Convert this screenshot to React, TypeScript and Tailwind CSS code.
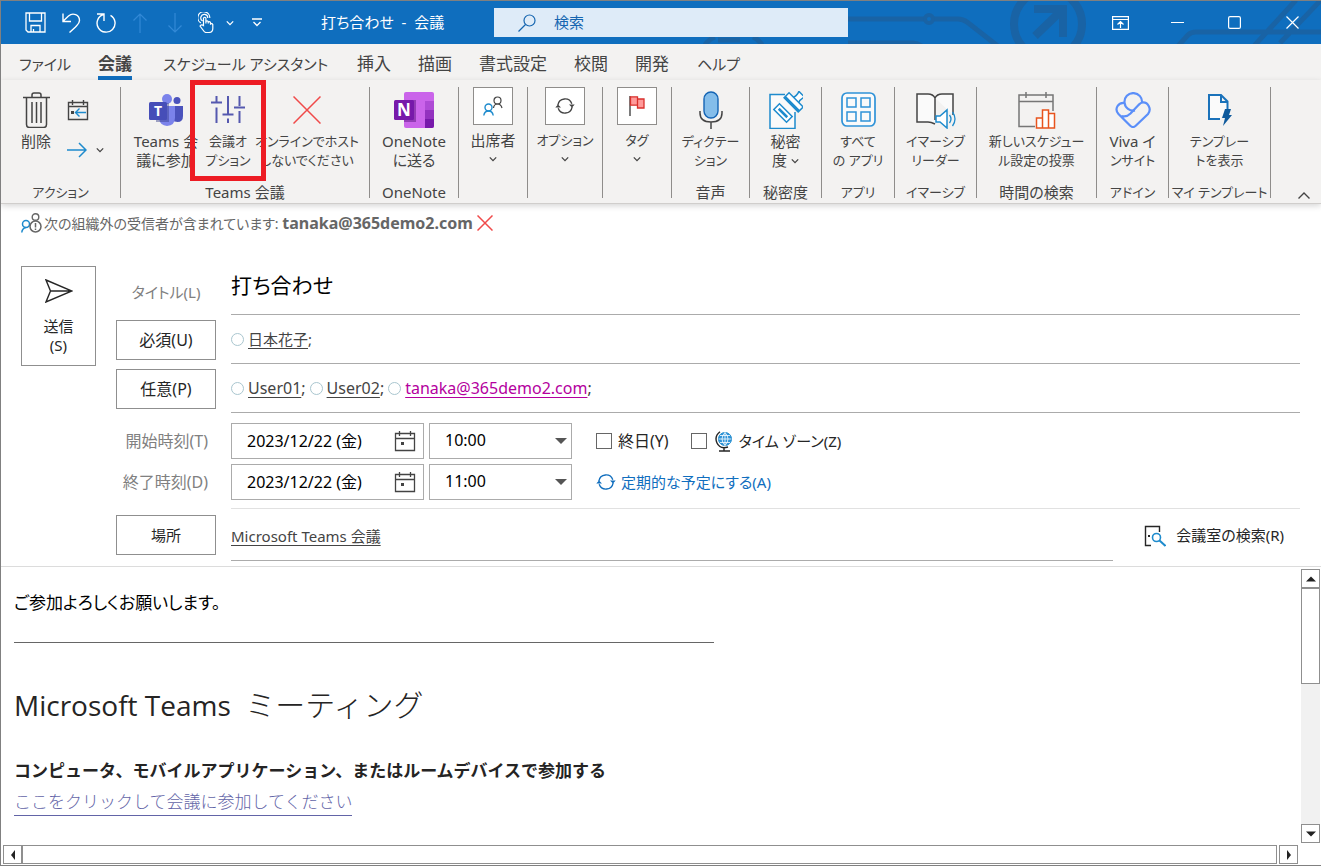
import type { ReactNode } from 'react';

const tabs = [
  { label: 'ファイル', width: 'w-[79px]', kana: true },
  { label: '会議', width: 'w-[65px]', active: true },
  { label: 'スケジュール アシスタント', width: 'w-[194px]', kana: true },
  { label: '挿入', width: 'w-[61px]' },
  { label: '描画', width: 'w-[61px]' },
  { label: '書式設定', width: 'w-[95px]' },
  { label: '校閲', width: 'w-[61px]' },
  { label: '開発', width: 'w-[62px]' },
  { label: 'ヘルプ', width: 'w-[60px]', kana: true },
];

type IconProps = { children: ReactNode; className?: string; box?: string };

function Icon({ children, className = 'w-5 h-5', box = '0 0 20 20' }: IconProps) {
  return (
    <svg viewBox={box} className={`shrink-0 ${className}`} fill="none" stroke="currentColor" aria-hidden="true">
      {children}
    </svg>
  );
}

function Chevron({ className = 'w-2 h-2' }: { className?: string }) {
  return (
    <Icon className={className} box="0 0 8 8">
      <path d="M.8 2.4 4 5.6 7.2 2.4" strokeWidth="1.3" />
    </Icon>
  );
}

function Sync({ className = 'w-5 h-5' }: { className?: string }) {
  return (
    <Icon className={className}>
      <path d="M2.9 9a7.2 7.2 0 0 1 13.9-1.3M17.1 11A7.2 7.2 0 0 1 3.2 12.3" strokeWidth="1.4" />
      <path d="m.3 11.5 2.7-3 3 3M14 8.5l3 3 2.7-3" fill="currentColor" stroke="none" />
    </Icon>
  );
}

function CalendarIcon() {
  return (
    <Icon className="w-[22px] h-[22px] text-[#444]" box="0 0 22 22">
      <path d="M1.5 3.5h19v17h-19zM1.5 8.5h19M5.5 1v5M16.5 1v5" strokeWidth="1.3" />
      <path d="M7 12h3v3H7z" fill="currentColor" stroke="none" />
    </Icon>
  );
}

function TitleBar() {
  return (
    <header className="relative flex h-[43px] shrink-0 items-center bg-[#0f6ebe] text-[15px] text-white">
      <svg className="absolute right-0 top-0 h-[43px] w-[621px]" viewBox="0 0 621 43" fill="none" stroke="#1963a5" strokeWidth="5" aria-hidden="true">
        <path d="M148 18h76M234 18h24q5 0 9 3l32 25M5 44q4-6 10-8M53 36q5 2 9 8M18 39h22M148 42h65q5 0 10 4" />
        <circle cx="229" cy="18" r="4" strokeWidth="4" />
        <circle cx="348" cy="23" r="34" strokeWidth="8" />
        <path d="M334 8h29v28M362 9l-27 26" strokeWidth="8" />
        <path d="m478 45 10-11q3-3 8-3h125M554 45l42-46M580 42 621-1" />
      </svg>

      <div className="relative flex w-[493px] shrink-0 items-center">
        <button aria-label="上書き保存" className="ml-6">
          <Icon className="h-[21px] w-[21px]" box="0 0 21 21">
            <path d="M1 1h19v19H3l-2-2zM4.500 1v8h12V1M6 20v-6.500h9V20M8.500 17v3" strokeWidth="1.300" />
          </Icon>
        </button>
        <button aria-label="元に戻す" className="ml-4">
          <Icon className="h-5 w-[19px]" box="0 0 19 20">
            <path d="M1 .5v8h8M1.300 8 6.500 3C11-1 17.500 2 17.500 7.500c0 3-1.500 4-4 6.500l-6 5.500" strokeWidth="1.400" />
          </Icon>
        </button>
        <button aria-label="やり直し" className="ml-[15px]">
          <Icon className="h-5 w-5">
            <path d="M1 1h7v7M7.500 1.500A9 9 0 1 0 14.500 2.300" strokeWidth="1.400" />
          </Icon>
        </button>
        <button aria-label="前のアイテム" className="ml-4 text-[#3289d6]">
          <Icon className="h-5 w-4" box="0 0 16 20">
            <path d="M8 20V1M1.500 7.500 8 1l6.500 6.500" strokeWidth="1.200" />
          </Icon>
        </button>
        <button aria-label="次のアイテム" className="ml-[19px] text-[#3289d6]">
          <Icon className="h-5 w-4" box="0 0 16 20">
            <path d="M8 0v19M1.500 12.500 8 19l6.500-6.500" strokeWidth="1.200" />
          </Icon>
        </button>
        <button aria-label="タッチ/マウス モードの切り替え" className="ml-[15px] flex items-center gap-3">
          <Icon className="h-[21px] w-4" box="0 0 16 21">
            <path d="M3 11A6 6 0 1 1 11.800 6M4.700 9A3.500 3.500 0 1 1 9.800 6" strokeWidth="1.200" />
            <path d="M5.500 13.500V6q1.200-1.500 2.400 0v5.500-2q1.200-1.200 2.300 0v2-1.500q1.200-1 2.300.3v1.700q1.300-1 2.300.5v4q0 4-4 4H8q-1.500 0-3-2.500l-3-4q1.500-2 3.500-.5z" strokeWidth="1.200" />
          </Icon>
          <Chevron />
        </button>
        <button aria-label="クイック アクセス ツール バーのユーザー設定" className="ml-[18px]">
          <Icon className="h-[9px] w-[10px]" box="0 0 10 9">
            <path d="M0 1h10M1.500 4 5 7.500 8.500 4" strokeWidth="1.300" />
          </Icon>
        </button>
        <h1 className="ml-[59px] whitespace-pre">打ち合わせ  -  会議</h1>
      </div>

      <label className="relative flex h-[29px] w-[354px] items-center bg-[#deebf8] text-[#1565b0]">
        <Icon className="ml-6 h-[18px] w-[18px]" box="0 0 18 18">
          <circle cx="11.500" cy="6.500" r="5.500" strokeWidth="1.200" />
          <path d="m7.500 10.500-7 7" strokeWidth="1.200" />
        </Icon>
        <input aria-label="検索" placeholder="検索" className="ml-[18px] min-w-0 flex-1 bg-transparent outline-none placeholder:text-[#1565b0]" />
      </label>

      <div className="relative ml-auto flex items-center">
        <button aria-label="リボンの表示オプション" className="flex w-[58px] justify-center">
          <Icon className="h-[14px] w-[17px]" box="0 0 17 14">
            <path d="M.6.6h15.800v12.800H.6zM.6 3.500h15.800M8.500 12V5.500M5.500 8.500l3-3 3 3" strokeWidth="1.200" />
          </Icon>
        </button>
        <button aria-label="最小化" className="flex w-[57px] justify-center">
          <Icon className="h-[13px] w-[13px]" box="0 0 13 13"><path d="M0 6.500h13" /></Icon>
        </button>
        <button aria-label="最大化" className="flex w-[57px] justify-center">
          <Icon className="h-[13px] w-[13px]" box="0 0 13 13"><rect x=".6" y=".6" width="11.800" height="11.800" rx="1.500" strokeWidth="1.200" /></Icon>
        </button>
        <button aria-label="閉じる" className="flex w-[58px] justify-center">
          <Icon className="h-[13px] w-[13px]" box="0 0 13 13"><path d="m.5.5 12 12m0-12-12 12" strokeWidth="1.200" /></Icon>
        </button>
      </div>
    </header>
  );
}

type GroupProps = { label?: string; width: string; small?: boolean; children: ReactNode };

function Group({ label, width, small, children }: GroupProps) {
  return (
    <section aria-label={label} className={`flex h-[111px] shrink-0 flex-col border-r border-[#8f8d8b] ${width}`}>
      <div className="flex flex-1 justify-center">{children}</div>
      {label && <p className={`h-4 whitespace-nowrap text-center leading-5 ${small ? 'text-[13px]' : ''}`}>{label}</p>}
    </section>
  );
}

type BigButtonProps = { icon: ReactNode; lines: ReactNode[]; width?: string; small?: boolean };

// Large ribbon button: icon area above one or two lines of text
function BigButton({ icon, lines, width = 'w-full', small }: BigButtonProps) {
  return (
    <button className={`flex shrink-0 flex-col items-center ${width} ${small ? 'text-[13px]' : ''}`}>
      <span className="flex h-[45px] items-center justify-center">{icon}</span>
      {lines.map((line, i) => (
        <span key={i} className="flex h-[19px] items-center gap-1 whitespace-nowrap leading-[19px]">{line}</span>
      ))}
    </button>
  );
}

function CollapsedGroup({ icon, label, width, small }: { icon: ReactNode; label: string; width: string; small?: boolean }) {
  return (
    <Group width={width}>
      <button className="flex flex-col items-center">
        <span className="flex h-[38px] w-10 items-center justify-center border border-[#8f8d8b] bg-white">{icon}</span>
        <span className={`mt-1 h-[22px] whitespace-nowrap leading-[22px] ${small ? 'text-[13px]' : ''}`}>{label}</span>
        <Chevron className="mt-1 h-2 w-2" />
      </button>
    </Group>
  );
}

function TeamsLogo() {
  return (
    <svg className="h-8 w-9" viewBox="0 0 36 32" aria-hidden="true">
      <circle cx="29" cy="6.500" r="3.500" fill="#4b53bc" />
      <path d="M24 12h11v10q0 6-5.500 6-3 0-5.500-2z" fill="#4b53bc" />
      <circle cx="19" cy="5" r="5" fill="#7b83eb" />
      <path d="M12 12h15v11.500q0 8-8 8.500-7-.5-8-7.500z" fill="#7b83eb" />
      <rect x="8" y="9" width="13" height="19" fill="#353b8a" opacity=".45" />
      <rect x="1" y="8" width="18" height="18" rx="1.500" fill="#464eb8" />
      <text x="10" y="22" textAnchor="middle" fontSize="14" fontWeight="700" fill="#fff">T</text>
    </svg>
  );
}

function OneNoteLogo() {
  return (
    <svg className="h-9 w-10" viewBox="0 0 40 36" aria-hidden="true">
      <rect x="10" width="30" height="36" rx="2" fill="#ca64ea" />
      <path d="M31 9h9v9h-9z" fill="#ae4bd5" />
      <path d="M31 18h9v9h-9z" fill="#9332bf" />
      <path d="M31 27h9v7q0 2-2 2h-7z" fill="#7719aa" />
      <rect x="10" y="8" width="12" height="22" fill="#5b1682" opacity=".5" />
      <rect y="8" width="20" height="20" rx="1.500" fill="#7719aa" />
      <text x="10" y="24" textAnchor="middle" fontSize="17" fontWeight="700" fill="#fff">N</text>
    </svg>
  );
}

function Ribbon() {
  return (
    <div className="relative flex h-[124px] shrink-0 border-b border-[#d0cecc] bg-[#f3f2f1] pt-[7px] text-[15px] text-[#444] shadow-[0_2px_6px_rgba(0,0,0,0.16)]">
      <Group label="アクション" width="w-[120px]" small>
        <BigButton
          width="ml-1 w-[62px]"
          lines={['削除']}
          icon={
            <Icon className="h-9 w-[27px]" box="0 0 27 36">
              <path d="M0 5.500h27M9 5V3q0-2 2-2h5q2 0 2 2v2M3.500 6v26.500q0 3 3 3h14q3 0 3-3V6M9 10v21M13.500 10v21M18 10v21" strokeWidth="1.500" />
            </Icon>
          }
        />
        <div className="flex flex-1 flex-col">
          <button aria-label="予定表にコピー" className="mt-3">
            <Icon className="h-[22px] w-[22px]" box="0 0 22 22">
              <path d="M1.500 3.500h19v17h-19zM1.500 7.500h19M5.500 1v5M16.500 1v5" strokeWidth="1.400" />
              <path d="M4 12h3v3H4z" fill="currentColor" stroke="none" />
              <path d="M19 13.500H8.500m4-4-4 4 4 4" stroke="#1e8bcd" strokeWidth="1.400" />
            </Icon>
          </button>
          <button aria-label="転送" className="mt-[21px] flex items-center gap-[9px]">
            <Icon className="h-4 w-5 text-[#1e8bcd]" box="0 0 20 16">
              <path d="M0 8h19m-7-7 7 7-7 7" strokeWidth="1.500" />
            </Icon>
            <Chevron />
          </button>
        </div>
      </Group>

      <Group label="Teams 会議" width="w-[249px]">
        <BigButton width="w-[68px]" lines={['Teams 会', '議に参加']} icon={<TeamsLogo />} />
        <div className="relative w-14 shrink-0">
          <BigButton
            small
            lines={['会議オ', 'プション']}
            icon={
              <Icon className="h-7 w-[34px] text-[#5558af]" box="0 0 34 28">
                <path d="M5.500 0v7M5.500 11.500V27M17 0v18M17 22.500V27M28.500 0v10M28.500 15v12M0 6.500h11M11.500 18.500h11M23 11.500h11" strokeWidth="2" />
              </Icon>
            }
          />
          <div className="pointer-events-none absolute -left-[10px] -top-[7px] h-[101px] w-[76px] border-[5px] border-[#ed1c24]" />
        </div>
        <BigButton
          width="w-[102px]"
          small
          lines={['オンラインでホスト', 'しないでください']}
          icon={
            <Icon className="h-7 w-7 text-[#f04a4a]" box="0 0 28 28">
              <path d="m.5.500 27 27m0-27-27 27" strokeWidth="1.500" />
            </Icon>
          }
        />
      </Group>

      <Group label="OneNote" width="w-[89px]">
        <BigButton lines={['OneNote', 'に送る']} icon={<OneNoteLogo />} />
      </Group>

      <CollapsedGroup
        label="出席者"
        width="w-[69px]"
        icon={
          <Icon className="h-5 w-5">
            <circle cx="14.500" cy="4.500" r="3.500" strokeWidth="1.200" />
            <path d="M10.500 12q.5-4 4-4t4.500 4" strokeWidth="1.200" />
            <g stroke="#1e8bcd" strokeWidth="1.400">
              <circle cx="5.500" cy="11.500" r="3.500" />
              <path d="M.8 19.500q.7-4.500 4.700-4.500t4.700 4.500" />
            </g>
          </Icon>
        }
      />
      <CollapsedGroup label="オプション" width="w-[75px]" icon={<Sync />} small />
      <CollapsedGroup
        label="タグ"
        width="w-[69px]"
        small
        icon={
          <Icon>
            <path d="M3 0v20" strokeWidth="1.400" />
            <path d="M3.500.800h7v8.400h-7zM10.500 3h6.500v9h-6.500z" fill="#ff9a9a" stroke="#d9302c" strokeWidth="1.300" />
          </Icon>
        }
      />

      <Group label="音声" width="w-[78px]">
        <BigButton
          small
          lines={['ディクテー', 'ション']}
          icon={
            <Icon className="h-[38px] w-6" box="0 0 24 38">
              <path d="M1 20v2q0 9 11 9t11-9v-2M12 31v7" strokeWidth="1.500" />
              <rect x="5" y="1" width="14" height="26" rx="7" fill="#84bdea" stroke="#1464b4" strokeWidth="1.400" />
            </Icon>
          }
        />
      </Group>

      <Group label="秘密度" width="w-[72px]">
        <BigButton
          lines={['秘密', <>度 <Chevron /></>]}
          icon={
            <Icon className="h-[38px] w-[35px] text-[#1e8bcd]" box="0 0 35 38">
              <path d="M17 3.500H2v34h25V21" fill="#fafafa" strokeWidth="1.500" />
              <g transform="rotate(45 15 22)">
                <rect x="6" y="18" width="18" height="8" fill="#fff" strokeWidth="1.500" />
                <path d="M9 22h12" strokeWidth="2.500" />
              </g>
              <g transform="rotate(45 26 11)" fill="#fff">
                <path d="M22 9q2-4 0-9h8q-2 5 0 9z" strokeWidth="1.500" />
                <rect x="16" y="8" width="20" height="7" strokeWidth="1.500" />
                <path d="M16 14h20" strokeWidth="3" />
              </g>
            </Icon>
          }
        />
      </Group>

      <Group label="アプリ" width="w-[73px]" small>
        <BigButton
          small
          lines={['すべて', 'の アプリ']}
          icon={
            <Icon className="h-[35px] w-[35px] text-[#2f93d8]" box="0 0 35 35">
              <rect x="1" y="1" width="33" height="33" rx="5" fill="#fafafa" strokeWidth="1.700" />
              <path d="M6 6h9v9H6zM20 6h9v9h-9zM6 20h9v9H6zM20 20h9v9h-9z" strokeWidth="1.500" />
            </Icon>
          }
        />
      </Group>

      <Group label="イマーシブ" width="w-[82px]" small>
        <BigButton
          small
          lines={['イマーシブ', 'リーダー']}
          icon={
            <Icon className="h-[38px] w-10" box="0 0 40 38">
              <path d="M19 7q-2-4-7-4H1v28h11q3 0 7 2M19 7q2-4 7-4h11v21M19 7v22" fill="#fafafa" strokeWidth="1.500" />
              <path d="M20 25h4l7-6v18l-7-6h-4z" fill="#fff" stroke="#1e8bcd" strokeWidth="1.500" />
              <path d="M33.500 24q3 4 0 8M36.500 21q5 7 0 14" stroke="#1e8bcd" strokeWidth="1.300" />
            </Icon>
          }
        />
      </Group>

      <Group label="時間の検索" width="w-[120px]">
        <BigButton
          small
          lines={['新しいスケジュー', 'ル設定の投票']}
          icon={
            <Icon className="h-[38px] w-[38px]" box="0 0 38 38">
              <path d="M17 35.500H1V4h34v16M1 10.500h34M8 1v6M28 1v6" stroke="#767676" strokeWidth="1.500" />
              <path d="M18.500 27h6v10h-6zM24.500 19h6v18h-6zM30.500 22.500h6V37h-6z" fill="#fff" stroke="#e8541e" strokeWidth="1.500" />
            </Icon>
          }
        />
      </Group>

      <Group label="アドイン" width="w-[72px]" small>
        <BigButton
          lines={['Viva イ', <span className="text-[13px]">ンサイト</span>]}
          icon={
            <Icon className="h-9 w-9 text-[#5b8ff9]" box="0 0 36 36">
              <path d="M20 18.500A8.800 8.800 0 1 1 27 11" strokeWidth="2.200" />
              <path d="M10 11C3 10-1 17 3.500 22L15 33.500q3 3 6 0L33 22c4-5 0-12-5.500-11.500-2 .2-3 1.500-4 2.500l-8 8.500q-4 4-9 2.500" strokeWidth="2.200" />
            </Icon>
          }
        />
      </Group>

      <Group label="マイ テンプレート" width="w-[102px]" small>
        <BigButton
          small
          lines={['テンプレー', 'トを表示']}
          icon={
            <Icon className="h-8 w-6 text-[#1a72ba]" box="0 0 24 32">
              <path d="M12 25H1V1h12l6.500 6.500V15M13 1v7h6.500" fill="#fafafa" strokeWidth="2" />
              <path d="m17 15h6l-2 6h3l-9 11 2-8h-3z" fill="#0f5a9c" stroke="none" />
            </Icon>
          }
        />
      </Group>

      <button aria-label="リボンを折りたたむ" className="mb-1 ml-auto mr-[11px] self-end">
        <Icon className="h-[7px] w-3" box="0 0 12 7"><path d="m.5 6.500 5.500-5.500 5.500 5.500" strokeWidth="1.400" /></Icon>
      </button>
    </div>
  );
}

function Recipient({ name, external }: { name: string; external?: boolean }) {
  return (
    <span className="flex items-center">
      <span className="mr-1 h-[13px] w-[13px] rounded-full border border-[#a9c6cf]" />
      <a href="#recipient" className={external ? 'text-[#b4009e] underline underline-offset-3' : 'underline underline-offset-3'}>{name}</a>;
    </span>
  );
}

function DateRow({ id, label, time }: { id: string; label: string; time: string }) {
  return (
    <>
      <label htmlFor={id} className="w-[100px] pr-2 text-right text-base text-[#808080]">{label}</label>
      <div className="ml-[15px] flex h-9 w-[193px] items-center border border-[#ababab] text-base">
        <input id={id} defaultValue="2023/12/22 (金)" className="h-full w-[162px] pb-0.5 pl-[15px] text-black outline-none" />
        <button type="button" aria-label="日付の選択"><CalendarIcon /></button>
      </div>
      <div className="relative ml-[5px] h-9 w-[143px] border border-[#ababab] text-base">
        <select aria-label={`${label} 時刻`} defaultValue={time} className="h-full w-full appearance-none pb-0.5 pl-[15px] text-black outline-none">
          <option>10:00</option>
          <option>11:00</option>
        </select>
        <svg className="pointer-events-none absolute right-1 top-[14px] h-[6px] w-3" viewBox="0 0 12 6" fill="#555" aria-hidden="true"><path d="M0 0h12L6 6z" /></svg>
      </div>
    </>
  );
}

function MeetingForm() {
  const fieldButton = 'h-10 w-[100px] shrink-0 border border-[#8f8f8f] text-[#262626]';
  return (
    <form className="flex shrink-0 border-b border-[#dcdcdc] pl-5 pr-[21px] text-[15px] text-[#444]" onSubmit={(e) => e.preventDefault()}>
      <button className="mt-6 flex h-[100px] w-[75px] shrink-0 flex-col items-center border border-[#8f8f8f] pt-3 leading-[19px] text-[#262626]">
        <Icon className="mb-[14px] h-6 w-7" box="0 0 28 24">
          <path d="M1 1l26 11L1 23l4.500-11zM5.500 12H26" strokeWidth="1.400" />
        </Icon>
        送信<br />(S)
      </button>

      <div className="ml-5 min-w-0 flex-1">
        <div className="flex h-[73px] items-end">
          <label htmlFor="title" className="mb-3 w-[100px] text-center text-[#808080]">タイトル(L)</label>
          <div className="ml-[15px] flex-1 border-b border-[#ababab] pb-3">
            <input id="title" defaultValue="打ち合わせ" className="h-9 w-full text-[21px] text-black outline-none" />
          </div>
        </div>
        <div className="flex h-[49px] items-end text-base">
          <button type="button" className={`mb-1 ${fieldButton}`}>必須(U)</button>
          <div className="ml-[15px] flex h-full flex-1 items-center border-b border-[#ababab] text-[15px]">
            <Recipient name="日本花子" />
          </div>
        </div>
        <div className="flex h-[49px] items-end text-base">
          <button type="button" className={`mb-1 ${fieldButton}`}>任意(P)</button>
          <div className="ml-[15px] flex h-full flex-1 items-center gap-1 border-b border-[#ababab]">
            <Recipient name="User01" />
            <Recipient name="User02" />
            <Recipient name="tanaka@365demo2.com" external />
          </div>
        </div>

        <div className="mt-[10px] flex items-center">
          <DateRow id="start" label="開始時刻(T)" time="10:00" />
          <label className="ml-6 flex items-center gap-[6px] text-base text-[#262626]">
            <input type="checkbox" className="h-4 w-4 appearance-none border border-[#666] bg-white" />
            終日(Y)
          </label>
          <label className="ml-[22px] flex items-center gap-[6px] text-[#262626]">
            <input type="checkbox" className="h-4 w-4 appearance-none border border-[#666] bg-white" />
            <Icon className="ml-0.5 h-[21px] w-[18px]" box="0 0 18 21">
              <circle cx="10" cy="8" r="6.500" fill="#2f93d8" stroke="#1e8bcd" />
              <path d="M3.500 8h13M10 1.500v13M5 4.500h10M5 11.500h10M10 1.500q-6 6.500 0 13 6-6.500 0-13" stroke="#fff" strokeWidth=".8" />
              <path d="M5 .800Q-1 5.500 2 12t11 4M9 16.500V20M4 20h11" strokeWidth="1.400" />
            </Icon>
            タイム ゾーン(Z)
          </label>
        </div>
        <div className="mt-[5px] flex items-center">
          <DateRow id="end" label="終了時刻(D)" time="11:00" />
          <button type="button" className="ml-6 flex items-center gap-[5px] text-[#106ebe]"><Sync />定期的な予定にする(A)</button>
        </div>

        <div className="mt-2 flex h-[58px]">
          <button type="button" className={`mt-[7px] ${fieldButton}`}>場所</button>
          <div className="ml-[15px] flex flex-1 border-t border-[#e1e1e1]">
            <div className="mb-[5px] flex flex-1 items-center border-b border-[#ababab]">
              <a href="#location" className="mt-1 underline underline-offset-3">Microsoft Teams 会議</a>
            </div>
            <button type="button" className="mb-1 flex w-[187px] items-center justify-end gap-[10px] pr-4 text-[#262626]">
              <Icon className="h-[22px] w-[22px]" box="0 0 22 22">
                <path d="M7 20.500H1.500v-19h14V7" strokeWidth="1.400" />
                <path d="M4 10h2v2H4z" fill="currentColor" stroke="none" />
                <circle cx="12.500" cy="12.500" r="4" stroke="#1e8bcd" strokeWidth="1.600" />
                <path d="m15.500 15.500 6 5.500" stroke="#1e8bcd" strokeWidth="2" />
              </Icon>
              会議室の検索(R)
            </button>
          </div>
        </div>
      </div>
    </form>
  );
}

function Arrow({ d }: { d: string }) {
  return <svg className="h-[10px] w-[10px]" viewBox="0 0 10 10" fill="#222" aria-hidden="true"><path d={d} /></svg>;
}

function MessageBody() {
  const key = 'flex h-[19px] w-[19px] shrink-0 items-center justify-center border border-[#8f8f8f] bg-white';
  return (
    <>
      <div className="flex min-h-0 flex-1">
        <article className="min-w-0 flex-1 overflow-hidden pl-[13px] text-[#252424]">
          <p className="mt-6 text-[17px] leading-6 text-black">ご参加よろしくお願いします。</p>
          <hr className="mt-[27px] w-[700px] border-[#666]" />
          <h2 className="mt-[39px] whitespace-pre font-['Open_Sans','Noto_Sans_CJK_JP',sans-serif] text-[28px] leading-[46px]">
            Microsoft Teams  <span className="text-[30px] font-light [font-feature-settings:normal]">ミーティング</span>
          </h2>
          <p className="mt-[30px] text-[17px] font-bold leading-[26px] [font-feature-settings:normal]">コンピュータ、モバイルアプリケーション、またはルームデバイスで参加する</p>
          <p className="mt-[5px] text-[17px] leading-[26px]">
            <a href="#join" className="inline-block border-b border-[#6264a7] font-light text-[#6264a7] [font-feature-settings:normal]">ここをクリックして会議に参加してください</a>
          </p>
        </article>
        <div className="mr-px mt-0.5 flex w-[19px] shrink-0 flex-col bg-[#f1f1f1]">
          <button aria-label="上へスクロール" className={key}><Arrow d="M0 7.500h10L5 2.500z" /></button>
          <div className="h-24 border border-[#8f8f8f] bg-white" />
          <button aria-label="下へスクロール" className={`mt-auto ${key}`}><Arrow d="M0 2.500h10L5 7.500z" /></button>
        </div>
      </div>
      <div className="mt-0.5 flex shrink-0 pb-px pl-0.5 pr-[23px]">
        <button aria-label="左へスクロール" className={key}><Arrow d="M7 0v10L3 5z" /></button>
        <div className="mr-0.5 flex-1 border border-[#8f8f8f] bg-white" />
        <button aria-label="右へスクロール" className={key}><Arrow d="M3 0v10l4-5z" /></button>
      </div>
    </>
  );
}

export default function App() {
  return (
    <div className="flex h-screen min-h-[760px] flex-col overflow-hidden border-b border-l border-t border-[#808080] bg-white font-['Noto_Sans','Noto_Sans_CJK_JP',sans-serif] [font-feature-settings:'palt']">
      <TitleBar />

      <nav className="flex h-9 shrink-0 bg-[#f3f2f1] pl-[18px] text-[17px] text-[#444]">
        {tabs.map((tab) => (
          <div key={tab.label} className={`shrink-0 ${tab.width} ${tab.kana ? 'text-[15px]' : ''}`}>
            <button
              className={
                tab.active
                  ? 'h-9 whitespace-nowrap border-b-4 border-[#106ebe] pt-1 font-bold leading-8'
                  : 'h-9 whitespace-nowrap pt-1 leading-8'
              }
            >
              {tab.label}
            </button>
          </div>
        ))}
      </nav>

      <Ribbon />

      <div className="flex h-[38px] shrink-0 items-center pl-5 text-[14px] text-[#666]">
        <Icon className="mr-0.5 h-5 w-[21px]" box="0 0 21 20">
          <circle cx="5" cy="11" r="3.500" stroke="#1e8bcd" strokeWidth="1.500" />
          <path d="M.8 19.500q.3-4 4-5" stroke="#1e8bcd" strokeWidth="1.500" />
          <circle cx="14.500" cy="4" r="3.300" strokeWidth="1.400" />
          <circle cx="14.500" cy="13.500" r="5.500" fill="#fff" strokeWidth="1.500" />
          <path d="M14.500 10v4.500M14.500 15.500V17" strokeWidth="1.500" />
        </Icon>
        <p>次の組織外の受信者が含まれています: <strong className="text-base">tanaka@365demo2.com</strong></p>
        <button aria-label="メッセージを閉じる" className="ml-1 text-[#f04a4a]">
          <Icon className="h-4 w-4" box="0 0 16 16"><path d="m.5.500 15 15m0-15-15 15" strokeWidth="1.500" /></Icon>
        </button>
      </div>

      <MeetingForm />
      <MessageBody />
    </div>
  );
}
